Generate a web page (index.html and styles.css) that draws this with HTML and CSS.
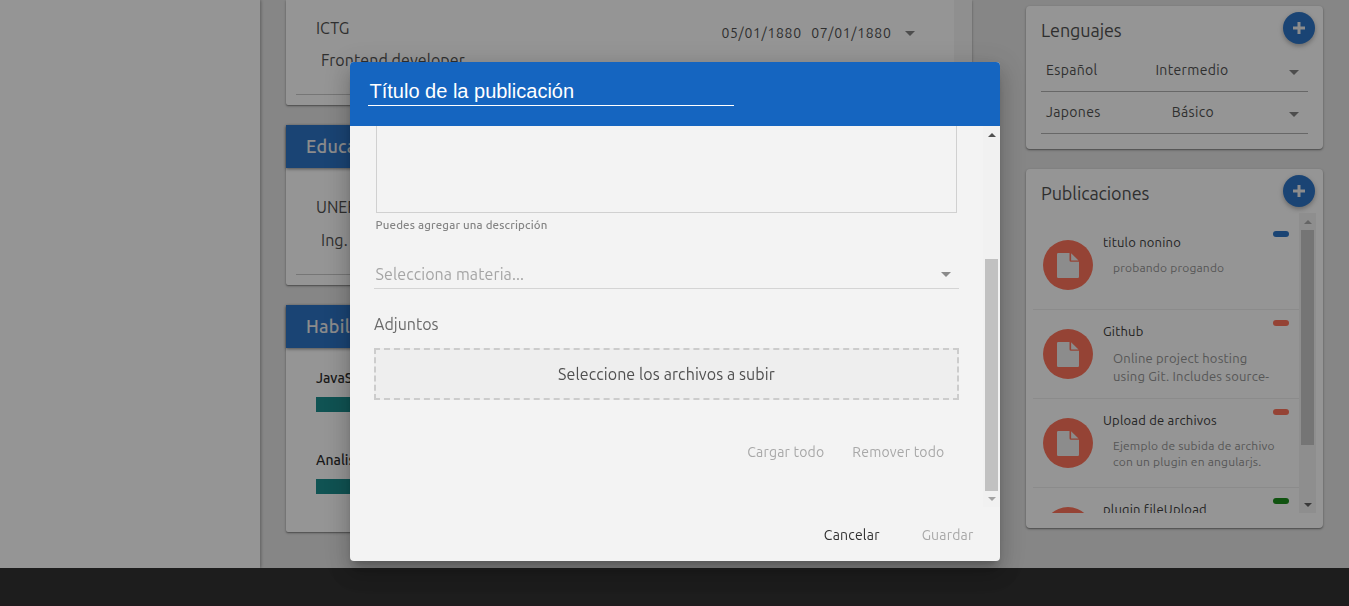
FILE: index.html
```html
<!DOCTYPE html>
<html lang="es">
<head>
<meta charset="utf-8">
<title>Perfil</title>
<link rel="stylesheet" href="styles.css">
</head>
<body>
<svg class="sprite" aria-hidden="true">
  <symbol id="file" viewBox="0 0 22 25"><path d="M1.2 0H12.500V7.200Q12.500 8.700 14 8.700H22V23.800Q22 25 20.800 25H1.200Q0 25 0 23.800V1.200Q0 0 1.200 0Z"/><path d="M14.100.2L21.500 7.400H14.100Z"/></symbol>
  <symbol id="plus" viewBox="0 0 12 12"><path d="M4.500 0h3v4.500H12v3H7.500V12h-3V7.500H0v-3h4.500z"/></symbol>
</svg>

<div class="page">
  <div class="content">
    <aside class="side"></aside>
    <main class="main">
      <section class="card experience">
        <div class="job">
          <div class="job-head"><span class="company">ICTG</span><span class="dates"><span>05/01/1880</span><span>07/01/1880</span><i class="caret"></i></span></div>
          <p class="role">Frontend developer</p>
          <hr class="rule">
        </div>
        <div class="track-strip"></div>
      </section>
      <section class="card education">
        <h2 class="card-title">Educación</h2>
        <p class="company">UNEFA</p>
        <p class="role">Ing. Sistemas</p>
        <hr class="rule">
      </section>
      <section class="card skills">
        <h2 class="card-title">Habilidades</h2>
        <p class="skill">JavaScript</p>
        <div class="bar"></div>
        <p class="skill">Analisis</p>
        <div class="bar"></div>
      </section>
    </main>
    <aside class="right">
      <section class="card languages">
        <div class="panel-head"><h3>Lenguajes</h3><button class="fab"><svg><use href="#plus"/></svg></button></div>
        <div class="lang"><span class="name">Español</span><span class="level">Intermedio</span><i class="caret"></i></div>
        <div class="lang"><span class="name">Japones</span><span class="level basic">Básico</span><i class="caret"></i></div>
      </section>
      <section class="card posts">
        <div class="panel-head"><h3>Publicaciones</h3><button class="fab"><svg><use href="#plus"/></svg></button></div>
        <div class="scroller">
          <div class="list">
            <article class="post"><span class="avatar"><svg><use href="#file"/></svg></span><div class="post-text"><h4>titulo nonino</h4><p class="small">probando progando</p></div><i class="tag blue"></i></article>
            <article class="post"><span class="avatar"><svg><use href="#file"/></svg></span><div class="post-text"><h4>Github</h4><p>Online project hosting<br>using Git. Includes source-</p></div><i class="tag"></i></article>
            <article class="post"><span class="avatar"><svg><use href="#file"/></svg></span><div class="post-text"><h4>Upload de archivos</h4><p class="small">Ejemplo de subida de archivo<br>con un plugin en angularjs.</p></div><i class="tag"></i></article>
            <article class="post"><span class="avatar"><svg><use href="#file"/></svg></span><div class="post-text"><h4>plugin fileUpload</h4></div><i class="tag green"></i></article>
          </div>
          <div class="sb"><i class="up dim"></i><div class="thumb"></div><i class="down"></i></div>
        </div>
      </section>
    </aside>
  </div>
  <footer class="footer"></footer>
</div>

<div class="backdrop">
  <div class="dialog">
    <header class="dialog-head"><div class="title-input">Título de la publicación</div></header>
    <div class="dialog-body">
      <div class="form">
        <div class="textarea"></div>
        <p class="hint">Puedes agregar una descripción</p>
        <div class="select"><span>Selecciona materia...</span><i class="caret"></i></div>
        <p class="label">Adjuntos</p>
        <div class="drop"><span>Seleccione los archivos a subir</span></div>
        <div class="file-actions"><span>Cargar todo</span><span>Remover todo</span></div>
      </div>
      <div class="sb"><i class="up"></i><div class="thumb"></div><i class="down dim"></i></div>
    </div>
    <footer class="dialog-foot"><span class="cancel">Cancelar</span><span>Guardar</span></footer>
  </div>
</div>
</body>
</html>
```

FILE: styles.css
```css
* { box-sizing: border-box; }
body { margin: 0; width: 1349px; height: 606px; overflow: hidden; font-family: Ubuntu, "Noto Sans", sans-serif; color: #3c3c3c; }
h2, h3, h4, p { margin: 0; font-weight: 400; white-space: nowrap; }
span { white-space: nowrap; }
.sprite { display: none; }
.page { height: 606px; display: flex; flex-direction: column; overflow: hidden; background: #e3e3e3; }
.content { height: 568px; display: flex; align-items: flex-start; }
.footer { height: 38px; background: #1a1a1a; border-bottom: 2px solid #1e161a; }
.side { width: 260px; height: 568px; background: #fff; box-shadow: 1px 0 3px rgba(0,0,0,.35); }
.main { width: 686px; margin-left: 26px; display: flex; flex-direction: column; gap: 20px; }
.card { background: #fff; border-radius: 2px; box-shadow: 0 1px 3px rgba(0,0,0,.35), 0 1px 1px rgba(0,0,0,.25); }
.experience { height: 105px; display: flex; border-radius: 0 0 2px 2px; }
.job { width: 668px; padding-top: 16px; }
.track-strip { flex: 1; background: #f4f4f4; }
.job-head { display: flex; justify-content: space-between; padding-right: 39px; }
.company { margin-left: 30px; font-size: 16px; line-height: 24px; }
.dates { display: flex; gap: 9.500px; font-size: 14px; line-height: 24px; padding-top: 5px; letter-spacing: .68px; }
.dates .caret { margin: 10px 0 0 4px; }
.caret { flex: none; width: 0; height: 0; border: 5px solid transparent; border-top-color: #757575; border-bottom: 0; }
.role { margin-left: 35px; font-size: 16px; line-height: 24px; letter-spacing: .07px; }
.job .role { margin-top: 3px; }
.rule { margin: 0 10px; border: 0; border-top: 1px solid #c3c3c3; }
.job .rule { margin-top: 22px; }
.education { height: 160px; }
.card-title { height: 43px; padding-left: 20px; line-height: 42px; background: #1565c0; color: #ededed; font-size: 18px; font-weight: 500; letter-spacing: .3px; box-shadow: 0 1px 3px rgba(0,0,0,.5); }
.education .company { margin-top: 27px; }
.education .role { margin-top: 9px; }
.education .rule { margin-top: 22px; }
.skills { height: 227px; }
.skill { margin: 18px 0 0 30px; font-size: 14px; line-height: 24px; font-weight: 500; color: #111; }
.bar { height: 15px; margin: 7px 30px 36px; background: #008080; }
.bar + .skill { margin-top: 0; }

.right { width: 297px; margin: 6px 0 0 54px; display: flex; flex-direction: column; gap: 20px; }
.right .card { border-radius: 4px; }
.languages { height: 143px; padding: 6px 8px 0 15px; }
.panel-head { display: flex; justify-content: space-between; height: 38px; }
h3 { font-size: 18px; line-height: 37px; letter-spacing: -.1px; }
.fab { width: 32px; height: 32px; padding: 0; border: 0; border-radius: 50%; background: #1565c0; display: flex; align-items: center; justify-content: center; box-shadow: 0 2px 5px rgba(0,0,0,.35); }
.fab svg { width: 12px; height: 12px; fill: #ededed; }
.lang { height: 42px; width: 267px; padding: 0 9px 0 5px; display: flex; border-bottom: 1px solid #a8a8a8; font-size: 14px; line-height: 40px; letter-spacing: .35px; }
.lang .name { width: 76px; }
.level { width: 140px; text-align: center; }
.level.basic { padding-left: 2px; }
.lang .caret { margin: 20px 0 0 auto; }
.posts { height: 359px; padding: 6px 7px 0 7px; }
.posts .panel-head { padding: 0 1px 0 8px; }
.scroller { height: 300px; overflow: hidden; display: flex; }
.list { width: 266px; }
.post { height: 89px; display: flex; border-bottom: 1px solid #ececec; padding-left: 10px; }
.post:first-child { height: 97px; padding-top: 8px; }
.avatar { flex: none; width: 50px; height: 50px; margin-top: 19px; border-radius: 50%; background: #ff6347; display: flex; align-items: center; justify-content: center; }
.avatar svg { width: 22px; height: 25px; fill: #ededed; }
.post-text { width: 170px; margin-left: 10px; }
h4 { margin-top: 11px; font-size: 13px; line-height: 20px; color: #262626; letter-spacing: .2px; }
.post p { margin: 8px 0 0 10px; font-size: 13px; line-height: 18px; color: #888; letter-spacing: .2px; }
.post p.small { font-size: 12px; line-height: 16px; }
.tag { width: 16px; height: 6px; margin-top: 10px; border-radius: 3px; background: #ff6347; }
.blue { background: #1565c0; }
.green { background: #008000; }
.sb { width: 17px; background: #f1f1f1; display: flex; flex-direction: column; align-items: center; flex: none; }
.sb .thumb { width: 13px; background: #c1c1c1; }
.up, .down { width: 0; height: 0; border: 4px solid transparent; }
.up { border-top: 0; border-bottom-color: #505050; margin: 7px 0 6px; }
.down { border-bottom: 0; border-top-color: #505050; margin: auto 0 6px; }
.up.dim { border-bottom-color: #a3a3a3; }
.down.dim { border-top-color: #a3a3a3; }
.posts .thumb { height: 215px; }

.backdrop { position: fixed; inset: 0; background: rgba(33,33,33,.48); padding: 62px 0 0 350px; }
.dialog { width: 650px; height: 499px; background: #f3f3f3; border-radius: 4px; overflow: hidden; box-shadow: 0 7px 8px -4px rgba(0,0,0,.2), 0 13px 19px 2px rgba(0,0,0,.14), 0 5px 24px 4px rgba(0,0,0,.12); }
.dialog-head { height: 64px; background: #1565c0; padding: 14px 18px; }
.title-input { width: 366px; height: 30px; padding-left: 1.500px; border-bottom: 1px solid #fff; color: #fff; font: 20px/31px "Liberation Sans", sans-serif; }
.dialog-body { height: 381px; display: flex; overflow: hidden; }
.form { width: 633px; padding: 0 24px; }
.textarea { width: 581px; height: 87px; margin-left: 2px; border: 1px solid #d0d0d0; border-top: 0; }
.hint { margin-left: 1.500px; font-size: 11.500px; line-height: 24px; font-weight: 500; color: #858585; letter-spacing: .17px; }
.select { height: 30px; margin-top: 22px; padding: 0 8px 0 1.500px; display: flex; justify-content: space-between; border-bottom: 1px solid #d4d4d4; font-size: 16px; line-height: 30px; color: #a5a5a5; letter-spacing: .1px; }
.select .caret { margin-top: 13px; border-top-color: #8a8a8a; }
.label { margin-top: 23px; font-size: 16px; line-height: 24px; color: #6a6a6a; }
.drop { height: 52px; margin-top: 12px; border: 2px dashed #ccc; background: #eee; font-size: 16px; line-height: 48px; text-align: center; color: #505050; letter-spacing: .1px; }
.file-actions { margin-top: 40px; display: flex; justify-content: flex-end; gap: 28px; padding-right: 14.500px; font-size: 14px; line-height: 24px; color: #a8a8a8; letter-spacing: .2px; }
.dialog .thumb { height: 232px; margin-top: 116px; }
.dialog-foot { height: 54px; display: flex; justify-content: flex-end; gap: 42px; padding: 16px 26.500px 0 0; font-size: 14px; line-height: 24px; color: #a8a8a8; letter-spacing: .2px; }
.cancel { color: #303030; }
```
